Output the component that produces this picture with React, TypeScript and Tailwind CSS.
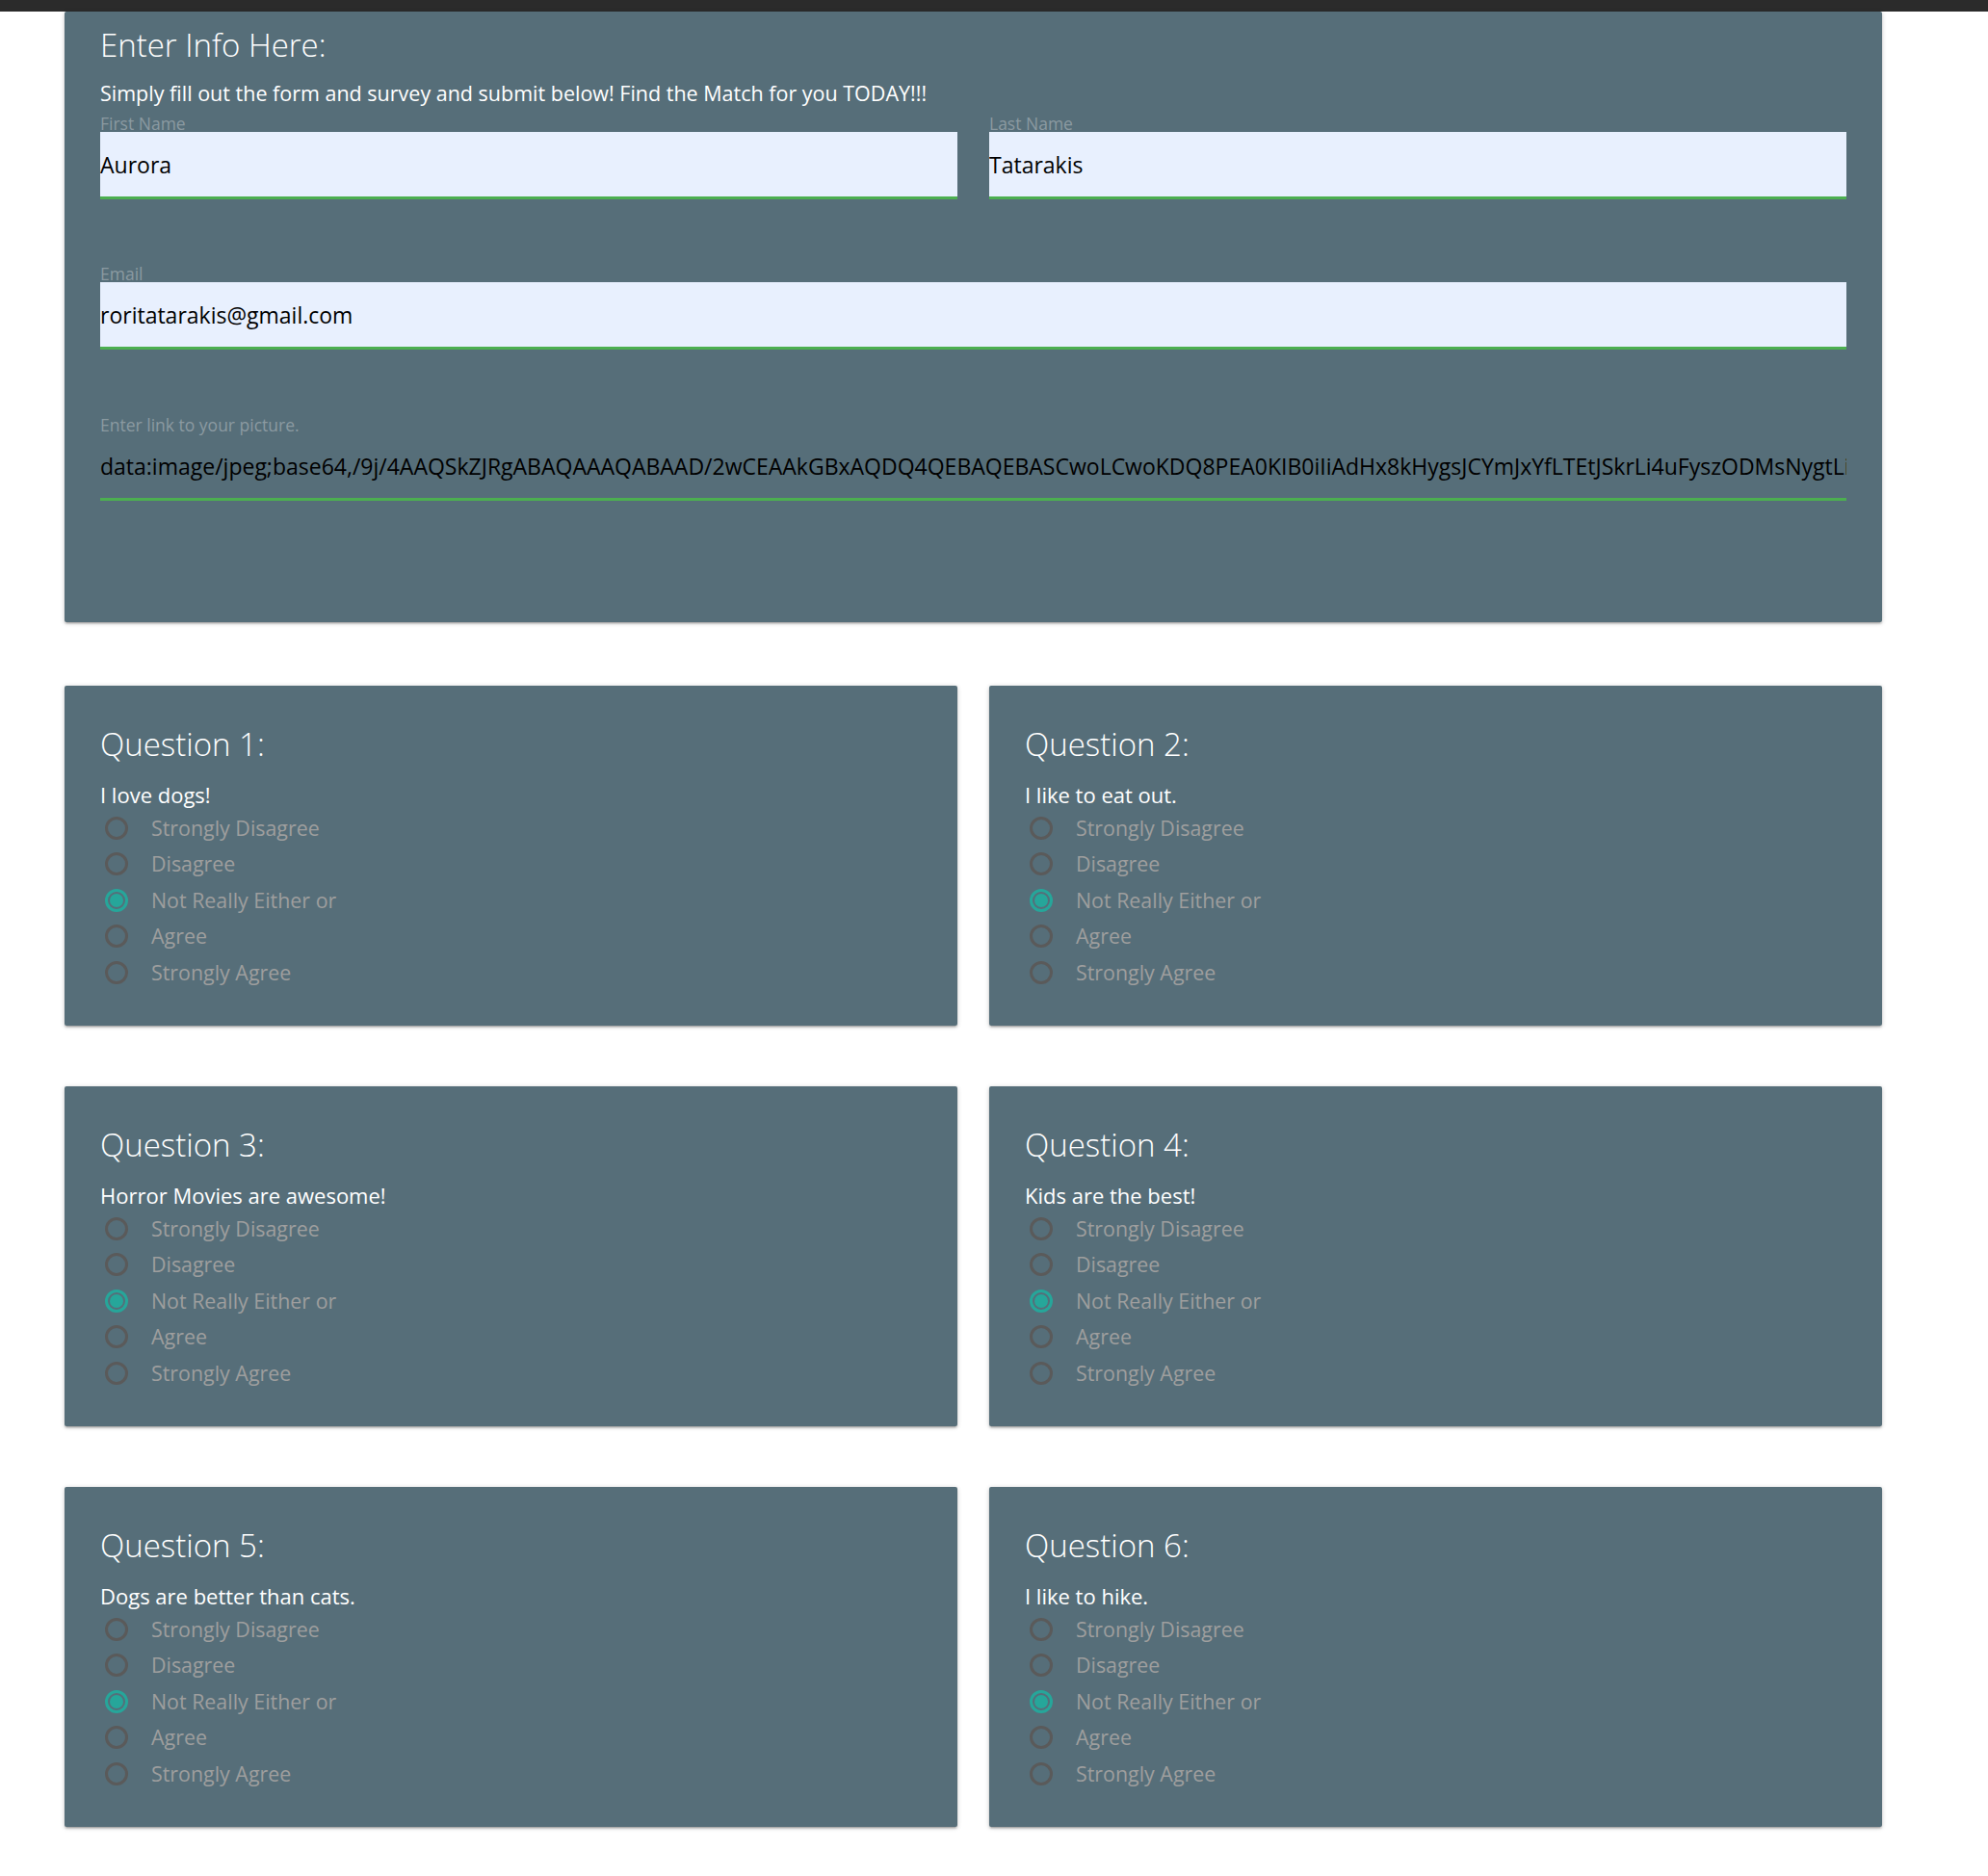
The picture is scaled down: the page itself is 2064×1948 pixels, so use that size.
const OPTIONS = ['Strongly Disagree', 'Disagree', 'Not Really Either or', 'Agree', 'Strongly Agree'];

const QUESTIONS = [
  'I love dogs!',
  'I like to eat out.',
  'Horror Movies are awesome!',
  'Kids are the best!',
  'Dogs are better than cats.',
  'I like to hike.',
];

const PICTURE =
  'data:image/jpeg;base64,/9j/4AAQSkZJRgABAQAAAQABAAD/2wCEAAkGBxAQDQ4QEBAQEBASCwoLCwoKDQ8PEA0KIB0iIiAdHx8kHygsJCYmJxYfLTEtJSkrLi4uFyszODMsNygtLisBCgoKDg0OFQ8QFS0dFR0rKysrKysr';

const card =
  'bg-[#566e79] rounded-[2px] shadow-[0_2px_2px_0_rgba(0,0,0,0.14),0_3px_1px_-2px_rgba(0,0,0,0.12),0_1px_5px_0_rgba(0,0,0,0.2)]';

function Field({ label, value, grow }: { label: string; value: string; grow?: boolean }) {
  return (
    <div className={grow ? 'flex-1' : ''}>
      <label className="block text-[17.5px] leading-[17px] text-[#8b9aa1]">{label}</label>
      <input
        readOnly
        value={value}
        className="block w-full h-[70px] bg-[#e8f0fe] border-b-[3px] border-[#4caf50] text-[23px] text-black outline-none"
      />
    </div>
  );
}

function Radio({ checked }: { checked: boolean }) {
  if (checked) {
    return (
      <span className="w-[24px] h-[24px] rounded-full border-[3px] border-[#26a69a] flex items-center justify-center">
        <span className="w-[14px] h-[14px] rounded-full bg-[#26a69a]" />
      </span>
    );
  }
  return <span className="w-[24px] h-[24px] rounded-full border-[3px] border-[#5a5a5a]" />;
}

function QuestionCard({ n, text }: { n: number; text: string }) {
  return (
    <div className={`${card} h-[353px] px-[37px] pt-[40px]`}>
      <h3 className="text-[33px] leading-[42px] font-light text-white">Question {n}:</h3>
      <p className="mt-[17px] text-[22px] leading-[28px] text-white">{text}</p>
      <div className="mt-[2px] flex flex-col">
        {OPTIONS.map((o, i) => (
          <div key={o} className="flex items-center h-[37.5px] pl-[5px]">
            <Radio checked={i === 2} />
            <span className="ml-[24px] text-[21.4px] text-[#9e9e9e]">{o}</span>
          </div>
        ))}
      </div>
    </div>
  );
}

export default function App() {
  return (
    <div className="min-h-[1948px] bg-white font-['Open_Sans',sans-serif]">
      <div className="h-[12px] bg-[#2b2b2b]" />
      <div className="ml-[67px] w-[1887px]">
        <div className={`${card} h-[634px] px-[37px] pt-[14px]`}>
          <h2 className="text-[33px] leading-[42px] font-light text-white">Enter Info Here:</h2>
          <p className="mt-[15px] text-[21.5px] leading-[28px] text-white">
            Simply fill out the form and survey and submit below! Find the Match for you TODAY!!!
          </p>
          <div className="mt-[9px] flex gap-[33px]">
            <Field label="First Name" value="Aurora" grow />
            <Field label="Last Name" value="Tatarakis" grow />
          </div>
          <div className="mt-[69px]">
            <Field label="Email" value="roritatarakis@gmail.com" />
          </div>
          <div className="mt-[70px]">
            <label className="block text-[17.5px] leading-[17px] text-[#8b9aa1]">
              Enter link to your picture.
            </label>
            <input
              readOnly
              value={PICTURE}
              className="block w-full h-[70px] bg-transparent border-b-[3px] border-[#4caf50] text-[23px] text-black outline-none"
            />
          </div>
        </div>

        <div className="mt-[66px] grid grid-cols-2 gap-x-[33px] gap-y-[63px]">
          {QUESTIONS.map((q, i) => (
            <QuestionCard key={q} n={i + 1} text={q} />
          ))}
        </div>
      </div>
    </div>
  );
}
